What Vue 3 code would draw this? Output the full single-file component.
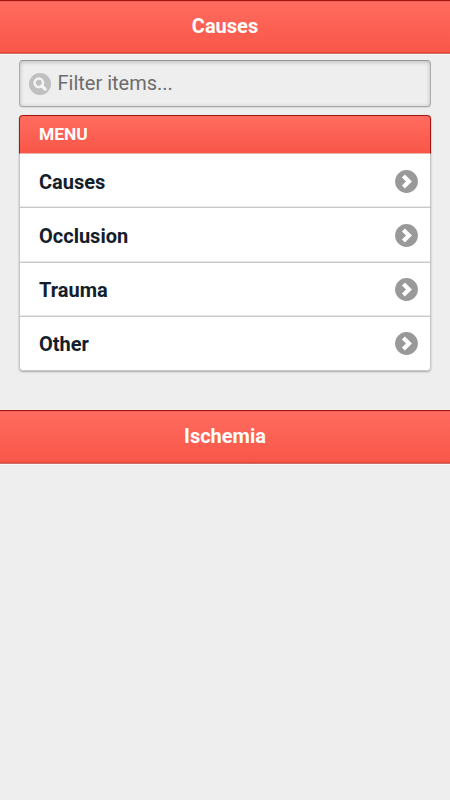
<script setup>
const items = ['Causes', 'Occlusion', 'Trauma', 'Other']
</script>

<template>
  <div class="page">
    <header class="bar"><h1>Causes</h1></header>
    <main class="content">
      <label class="search">
        <svg class="search-icon" viewBox="0 0 22 22">
          <circle cx="11" cy="11" r="11" fill="#c0c0c0" />
          <circle cx="9.8" cy="9.8" r="4.2" fill="none" stroke="#f3f3f3" stroke-width="2.5" />
          <path d="M12.9 12.9L16.2 16.2" stroke="#f3f3f3" stroke-width="3.2" stroke-linecap="round" />
        </svg>
        <input type="text" placeholder="Filter items..." />
      </label>
      <ul class="list">
        <li class="divider">MENU</li>
        <li v-for="item in items" :key="item" class="row">
          <span>{{ item }}</span>
          <svg class="arrow" viewBox="0 0 23 23">
            <circle cx="11.5" cy="11.5" r="11.4" fill="#999" />
            <path d="M8.4 5.9L14 11.5L8.4 17.1" fill="none" stroke="#fff" stroke-width="4.2" />
          </svg>
        </li>
      </ul>
    </main>
    <footer class="bar footer"><h1>Ischemia</h1></footer>
  </div>
</template>

<style>
body {
  margin: 0;
  background: #eee;
}
</style>

<style scoped>
.page {
  min-height: 800px;
  background: #eee;
  font-family: Roboto, sans-serif;
}
.bar {
  box-sizing: border-box;
  height: 54px;
  border-top: 1px solid #a51510;
  border-bottom: 1px solid #cf7068;
  background: linear-gradient(#ff6c60, #f85647);
  box-shadow: inset 0 1px #f26056, inset 0 -1px #e5483a, 0 1px #f8f8f8;
  display: flex;
  justify-content: center;
}
h1 {
  margin: 0;
  color: #fff;
  font-size: 20px;
  line-height: 50px;
  font-weight: 700;
}
.content {
  padding: 6px 19px 0;
}
.search {
  box-sizing: border-box;
  height: 47px;
  border: 1px solid #aaa;
  border-top-color: #969696;
  border-radius: 4px;
  box-shadow: inset 0 1px 4px rgba(0, 0, 0, 0.22), 0 1px #d8d8d8;
  display: flex;
  align-items: center;
  gap: 6.5px;
  padding-left: 9px;
}
.search-icon {
  width: 22px;
  height: 22px;
  flex: none;
}
input {
  flex: 1;
  min-width: 0;
  padding: 0 0 2px;
  border: 0;
  outline: 0;
  background: transparent;
  font: 400 20px/24px Roboto, sans-serif;
  color: #666;
}
input::placeholder {
  color: #6c6c6c;
  opacity: 1;
}
.list {
  list-style: none;
  margin: 8px 0 0;
  padding: 0;
  border-radius: 4px;
  box-shadow: 0 1px 2px rgba(0, 0, 0, 0.3);
}
.divider {
  box-sizing: border-box;
  height: 39px;
  padding-left: 19px;
  border: 1px solid #a51510;
  border-bottom: 1px solid #e5b5b1;
  border-radius: 4px 4px 0 0;
  background: linear-gradient(#ff6c60, #f85647);
  color: #fff;
  font-size: 17.4px;
  font-weight: 700;
  line-height: 36px;
}
.row {
  box-sizing: border-box;
  height: 54.25px;
  padding: 1px 12px 0 19px;
  border: 1px solid #c8c8c8;
  border-top: 0;
  background: #fff;
  color: #13202c;
  font-size: 20px;
  font-weight: 700;
  display: flex;
  align-items: center;
  justify-content: space-between;
}
.row span {
  padding-top: 1px;
}
.row:not(:last-child) {
  box-shadow: inset 0 -1px #e9e9e9;
}
.row:last-child {
  border-radius: 0 0 4px 4px;
}
.arrow {
  width: 23px;
  height: 23px;
}
.footer {
  margin-top: 39px;
}
</style>
